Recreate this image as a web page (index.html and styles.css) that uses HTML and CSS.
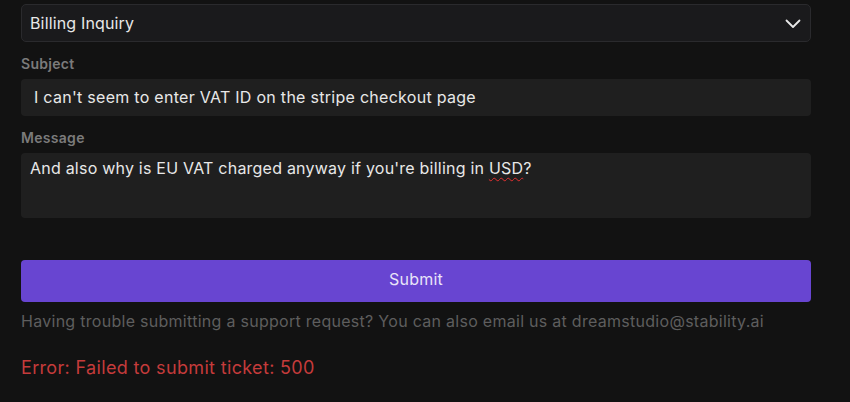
FILE: index.html
```html
<!DOCTYPE html>
<html lang="en">
<head>
<meta charset="utf-8">
<link rel="stylesheet" href="styles.css">
</head>
<body>
<form class="form">
  <div class="select">
    <span class="select-value">Billing Inquiry</span>
    <svg class="chevron" width="16" height="10" viewBox="0 0 16 10"><path d="M1.5 1.5 L8 8 L14.5 1.5" fill="none" stroke="#e8e8e8" stroke-width="1.8" stroke-linecap="round" stroke-linejoin="round"/></svg>
  </div>
  <label class="label">Subject</label>
  <div class="input">I can't seem to enter VAT ID on the stripe checkout page</div>
  <label class="label">Message</label>
  <div class="textarea">And also why is EU VAT charged anyway if you're billing in <span class="spell">USD</span>?</div>
  <button type="button" class="submit">Submit</button>
  <p class="help">Having trouble submitting a support request? You can also email us at dreamstudio@stability.ai</p>
  <p class="error">Error: Failed to submit ticket: 500</p>
</form>
</body>
</html>
```

FILE: styles.css
```css
html, body {
  margin: 0;
  padding: 0;
  background: #121212;
}
body {
  font-family: Inter, "Noto Sans", sans-serif;
  color: #e8e8e8;
  letter-spacing: 0.25px;
}
.form {
  display: flex;
  flex-direction: column;
  width: 790px;
  padding: 4px 0 0 21px;
}
.select {
  box-sizing: border-box;
  height: 38px;
  border: 1px solid #2a2a2d;
  border-radius: 5px;
  background: #1a1a1c;
  display: flex;
  align-items: center;
  justify-content: space-between;
  padding: 0 9px 0 8px;
  font-size: 16px;
  letter-spacing: 0.15px;
}
.chevron {
  margin-top: 1px;
}
.label {
  font-size: 14px;
  font-weight: 600;
  color: #7b7b7b;
  line-height: 20px;
  margin-top: 12px;
  margin-bottom: 5px;
  letter-spacing: 0.3px;
}
.input {
  box-sizing: border-box;
  height: 37px;
  background: #1f1f1f;
  border-radius: 4px;
  padding: 0 13px;
  font-size: 16px;
  line-height: 37px;
  letter-spacing: 0.28px;
}
.textarea {
  box-sizing: border-box;
  height: 65px;
  background: #1f1f1f;
  border-radius: 4px;
  padding: 4px 9px;
  font-size: 16px;
  line-height: 22px;
  letter-spacing: 0.22px;
}
.spell {
  text-decoration: underline wavy #e03030;
  text-decoration-thickness: 1px;
  text-underline-offset: 3px;
}
.submit {
  margin-top: 42px;
  height: 42px;
  border: none;
  border-radius: 4px;
  background: #6845d1;
  color: #e9e4f8;
  font-family: Inter, "Noto Sans", sans-serif;
  font-size: 16px;
  line-height: 20px;
  letter-spacing: 0.25px;
  padding: 0 0 4px;
}
.help {
  margin: 8px 0 0;
  font-size: 16px;
  line-height: 22px;
  color: #5e5e5e;
  letter-spacing: 0.28px;
}
.error {
  margin: 24px 0 0;
  font-size: 18px;
  line-height: 24px;
  color: #c53b3b;
  letter-spacing: 0.34px;
}
```
